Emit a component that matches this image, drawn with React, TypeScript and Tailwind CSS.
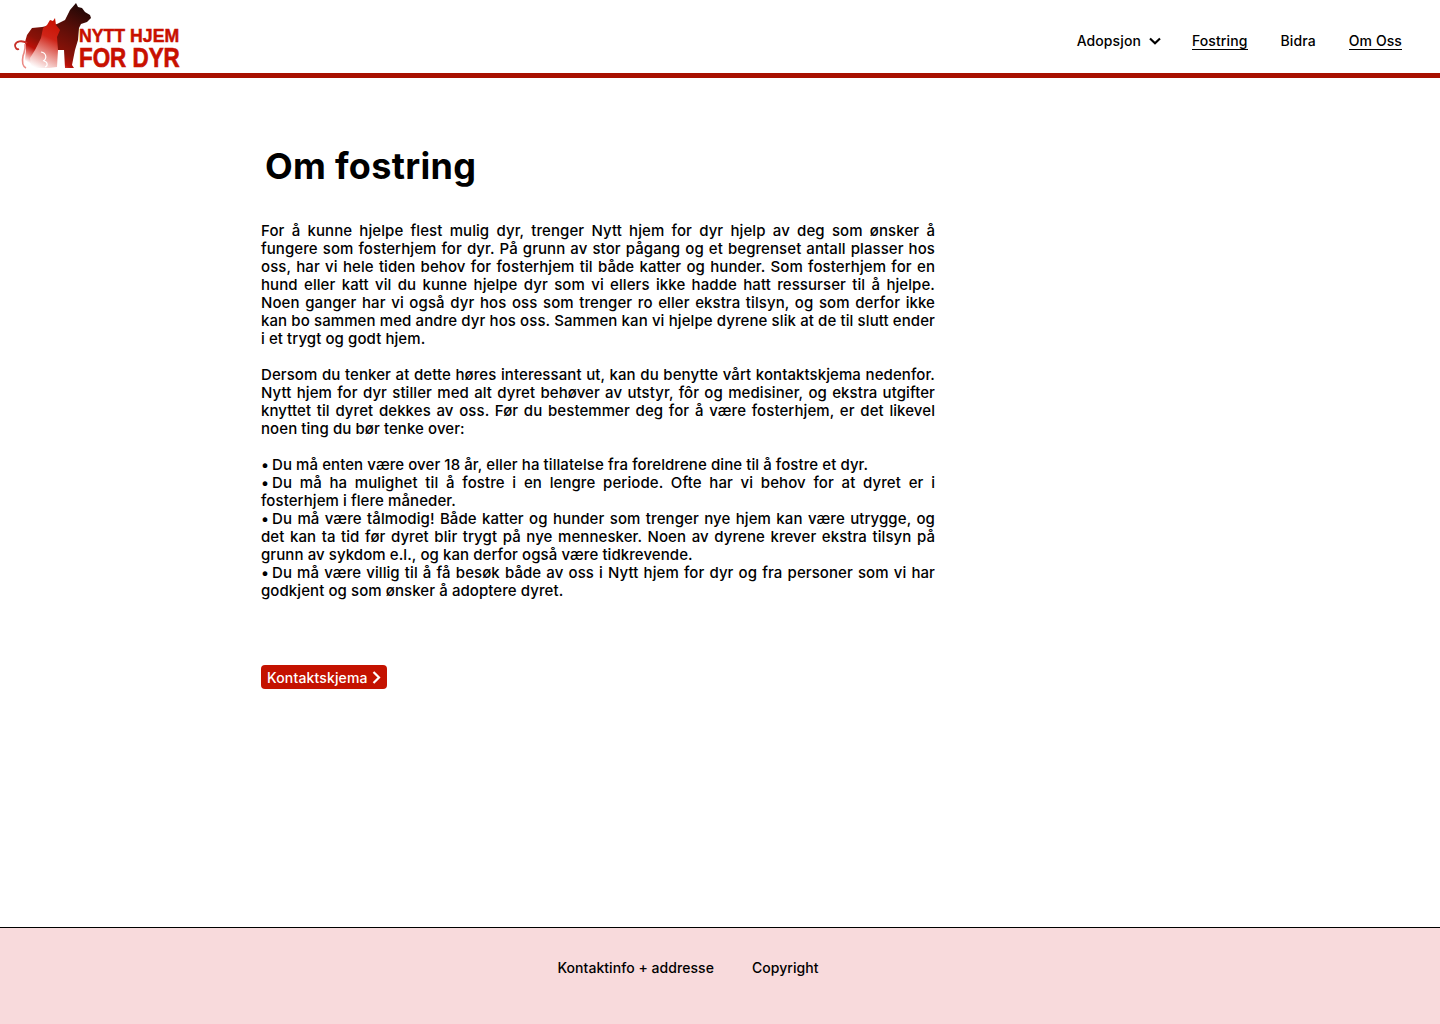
const paragraphs = [
  'For å kunne hjelpe flest mulig dyr, trenger Nytt hjem for dyr hjelp av deg som ønsker å fungere som fosterhjem for dyr. På grunn av stor pågang og et begrenset antall plasser hos oss, har vi hele tiden behov for fosterhjem til både katter og hunder. Som fosterhjem for en hund eller katt vil du kunne hjelpe dyr som vi ellers ikke hadde hatt ressurser til å hjelpe. Noen ganger har vi også dyr hos oss som trenger ro eller ekstra tilsyn, og som derfor ikke kan bo sammen med andre dyr hos oss. Sammen kan vi hjelpe dyrene slik at de til slutt ender i et trygt og godt hjem.',
  'Dersom du tenker at dette høres interessant ut, kan du benytte vårt kontaktskjema nedenfor. Nytt hjem for dyr stiller med alt dyret behøver av utstyr, fôr og medisiner, og ekstra utgifter knyttet til dyret dekkes av oss. Før du bestemmer deg for å være fosterhjem, er det likevel noen ting du bør tenke over:',
];

const bullets = [
  'Du må enten være over 18 år, eller ha tillatelse fra foreldrene dine til å fostre et dyr.',
  'Du må ha mulighet til å fostre i en lengre periode. Ofte har vi behov for at dyret er i fosterhjem i flere måneder.',
  'Du må være tålmodig! Både katter og hunder som trenger nye hjem kan være utrygge, og det kan ta tid før dyret blir trygt på nye mennesker. Noen av dyrene krever ekstra tilsyn på grunn av sykdom e.l., og kan derfor også være tidkrevende.',
  'Du må være villig til å få besøk både av oss i Nytt hjem for dyr og fra personer som vi har godkjent og som ønsker å adoptere dyret.',
];

function Logo() {
  return (
    <div className="relative h-[73px] w-[180px]">
      <svg width="95" height="73" viewBox="0 0 95 73" className="absolute left-0 top-0">
        <defs>
          <linearGradient id="dog" gradientUnits="userSpaceOnUse" x1="75" y1="5" x2="40" y2="72">
            <stop offset="0" stopColor="#260806" />
            <stop offset="0.3" stopColor="#5a0e08" />
            <stop offset="0.63" stopColor="#8a1208" />
            <stop offset="0.76" stopColor="#bc1008" />
            <stop offset="0.86" stopColor="#e67a74" />
            <stop offset="0.96" stopColor="#ffffff" />
          </linearGradient>
          <linearGradient id="cat" gradientUnits="userSpaceOnUse" x1="58" y1="22" x2="36" y2="68">
            <stop offset="0" stopColor="#c81000" />
            <stop offset="0.35" stopColor="#cf2418" />
            <stop offset="0.7" stopColor="#eb9c96" />
            <stop offset="1" stopColor="#ffffff" />
          </linearGradient>
        </defs>
        <path
          fill="url(#dog)"
          d="M76 3 L78 7 L82 8 L85 12 L90 15 L91 18 L87 22 L81 24 L79 28 L78 40 L75 50 L72 65 L74 68 L65 68 L64 50 L58 50 L40 53 L31 68 L24 68 L26 50 L25 42 L27 35 L32 28 L42 27 L57 24 L65 20 L70 10 Z"
        />
        <path
          fill="url(#cat)"
          d="M50 20 L53 21 L55 18 L56 25 L60 30 L57 37 L58 50 L57 67 L49 68 L31 68 L30 58 L35 50 L41 38 L43 28 L47 25 Z"
        />
        <path
          fill="none"
          stroke="#c83028"
          strokeWidth="1.8"
          d="M27 43 C22 40 16 41 15 45 C15 48 17 50 19 49"
        />
        <path fill="none" stroke="#eb8a84" strokeWidth="1.6" d="M25 44 C26 50 24 52 23 56 C22 61 22 66 26 68" />
        <path fill="none" stroke="#ffffff" strokeWidth="1.2" d="M41 52 C47 53 47 59 43 61 M44 61 C48 62 48 66 45 67" />
      </svg>
      <div className="absolute left-[79px] top-[27px] origin-top-left scale-x-[0.93] whitespace-nowrap font-['Liberation_Sans',sans-serif] text-[19px] font-bold leading-[17px] text-[#c81000] [-webkit-text-stroke:0.5px_#c81000]">
        NYTT HJEM
      </div>
      <div className="absolute left-[79px] top-[44px] origin-top-left scale-x-[0.8] whitespace-nowrap font-['Liberation_Sans',sans-serif] text-[28px] font-bold leading-[28px] text-[#c81000] [-webkit-text-stroke:0.7px_#c81000]">
        FOR DYR
      </div>
    </div>
  );
}

function Header() {
  return (
    <header className="flex h-[78px] items-start justify-between border-b-[5px] border-[#a81000] pr-[38px]">
      <Logo />
      <nav className="flex items-center pt-[32px] text-sm font-[550] leading-[18px] tracking-[0.1px] text-black">
        <a className="flex items-center">
          Adopsjon
          <svg width="12" height="8" viewBox="0 0 12 8" className="ml-[8px]" fill="none" stroke="#000" strokeWidth="2.2">
            <path d="M1 1.5 L6 6.2 L11 1.5" />
          </svg>
        </a>
        <a className="ml-[31px] border-b border-black leading-[17px]">Fostring</a>
        <a className="ml-[33px]">Bidra</a>
        <a className="ml-[33px] border-b border-black leading-[17px]">Om Oss</a>
      </nav>
    </header>
  );
}

export default function App() {
  return (
    <div className="flex min-h-[1024px] flex-col bg-white font-['Inter',sans-serif] text-black">
      <Header />
      <main className="ml-[261px] w-[674px] flex-1">
        <h1 className="mt-[64px] pl-[4px] text-[36px] font-bold leading-[48px] tracking-[0.3px]">Om fostring</h1>
        <div className="mt-[32px] text-justify text-[15px] font-[550] leading-[18px] tracking-[0.08px]">
          {paragraphs.map((p) => (
            <p key={p.slice(0, 12)} className="mb-[18px]">
              {p}
            </p>
          ))}
          {bullets.map((b) => (
            <p key={b.slice(0, 12)}>
              <span className="inline-block w-[11px]">•</span>
              {b}
            </p>
          ))}
        </div>
        <button
          type="button"
          className="mt-[65px] flex h-[24px] w-[126px] items-center rounded-[4px] bg-[#c41200] pl-[6px] pt-[1px] text-sm font-[550] tracking-[0.15px] text-white"
        >
          Kontaktskjema
          <svg width="9" height="13" viewBox="0 0 9 13" className="ml-[4px]" fill="none" stroke="#fff" strokeWidth="2.2">
            <path d="M1.5 1 L7 6.5 L1.5 12" />
          </svg>
        </button>
      </main>
      <footer className="flex h-[97px] justify-center gap-[38px] border-t border-black bg-[#f8dadc] pr-[64px] pt-[31px] text-sm font-[550] leading-[18px] tracking-[0.05px]">
        <span>Kontaktinfo + addresse</span>
        <span>Copyright</span>
      </footer>
    </div>
  );
}
